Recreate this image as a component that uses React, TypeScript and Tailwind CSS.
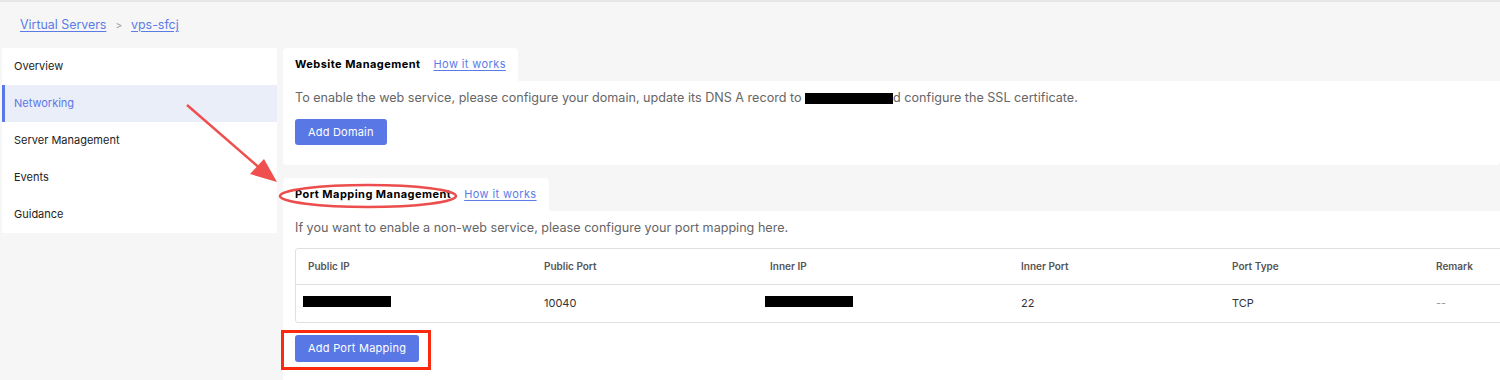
const font = { fontFamily: "Inter, 'Noto Sans', sans-serif" };

const navItems = ["Overview", "Networking", "Server Management", "Events", "Guidance"];

const columns = ["Public IP", "Public Port", "Inner IP", "Inner Port", "Port Type", "Remark"];

function Tab({ title }: { title: string }) {
  return (
    <div className="flex h-[33px] w-fit items-center gap-[13px] rounded-t-[4px] bg-white pl-[12px] pr-[12px]">
      <span className="text-[11px] font-bold tracking-[0.45px] text-black">{title}</span>
      <a className="text-[11px] tracking-[0.4px] text-[#5b7be9] underline underline-offset-2">How it works</a>
    </div>
  );
}

function Redacted({ w }: { w: string }) {
  return <span className={`inline-block h-[11px] bg-black ${w}`} />;
}

export default function App() {
  return (
    <div
      className="relative h-[380px] w-full overflow-hidden border-t-2 border-[#e6e6e6] bg-[#f6f6f6]"
      style={font}
    >
      <div className="flex h-[46px] items-center gap-[9px] pl-[20px] text-[12.4px]">
        <a className="text-[#5b7be9] underline underline-offset-2">Virtual Servers</a>
        <span className="text-[10px] text-[#999]">&gt;</span>
        <a className="text-[#5b7be9] underline underline-offset-2">vps-sfcj</a>
      </div>

      <div className="flex items-start gap-[6px] pl-[2px]">
        <nav className="w-[275px] shrink-0 bg-white py-0">
          {navItems.map((item) => {
            const active = item === "Networking";
            return (
              <div
                key={item}
                className={
                  active
                    ? "flex h-[37px] items-center border-l-[3px] border-[#5a78e6] bg-[#eaeef9] pl-[9px] text-[11px] text-[#5a78e6]"
                    : "flex h-[37px] items-center pl-[12px] text-[11px] text-[#222]"
                }
              >
                {item}
              </div>
            );
          })}
        </nav>

        <main className="min-w-0 flex-1">
          <section>
            <Tab title="Website Management" />
            <div className="h-[84px] rounded-b-[4px] bg-white px-[12px] pt-[8px]">
              <p className="flex items-center text-[12.6px] text-[#666]">
                To enable the web service, please configure your domain, update its DNS A record to&nbsp;
                <Redacted w="w-[88px]" />
                d configure the SSL certificate.
              </p>
              <button className="mt-[11px] h-[26px] rounded-[3px] bg-[#5a77e6] px-[13px] text-[11px] tracking-[0.2px] text-white">
                Add Domain
              </button>
            </div>
          </section>

          <section className="mt-[13px]">
            <Tab title="Port Mapping Management" />
            <div className="h-[200px] bg-white px-[12px] pt-[8px]">
              <p className="text-[12.6px] text-[#666]">
                If you want to enable a non-web service, please configure your port mapping here.
              </p>
              <div className="mt-[10px] w-[1400px] rounded-[3px] border border-[#e0e0e0]">
                <div className="grid h-[36px] grid-cols-[236px_226px_251px_211px_204px_150px] items-center border-b border-[#e0e0e0] pl-[12px] text-[10px] font-semibold text-[#555]">
                  {columns.map((c) => (
                    <span key={c}>{c}</span>
                  ))}
                </div>
                <div className="grid h-[37px] grid-cols-[236px_226px_251px_211px_204px_150px] items-center pl-[7px] text-[11px] text-[#333]">
                  <span><Redacted w="w-[88px]" /></span>
                  <span className="pl-[5px]">10040</span>
                  <span><Redacted w="w-[88px]" /></span>
                  <span className="pl-[5px]">22</span>
                  <span className="pl-[5px]">TCP</span>
                  <span className="pl-[5px] text-[#999]">--</span>
                </div>
              </div>
              <button className="mt-[12px] h-[27px] rounded-[3px] bg-[#5a77e6] px-[13px] text-[11px] tracking-[0.25px] text-white">
                Add Port Mapping
              </button>
            </div>
          </section>
        </main>
      </div>

      <svg className="pointer-events-none absolute left-0 top-0" width="1500" height="380">
        <line x1="187" y1="103" x2="262" y2="168" stroke="#f04f4f" strokeWidth="2.5" />
        <polygon points="277,180 250,172 264,157" fill="#f04f4f" />
        <ellipse cx="368" cy="194" rx="88" ry="11" fill="none" stroke="#ec4d4d" strokeWidth="2.5" />
        <rect x="282.5" y="329.5" width="147" height="37" fill="none" stroke="#fa2a10" strokeWidth="3" />
      </svg>
    </div>
  );
}
